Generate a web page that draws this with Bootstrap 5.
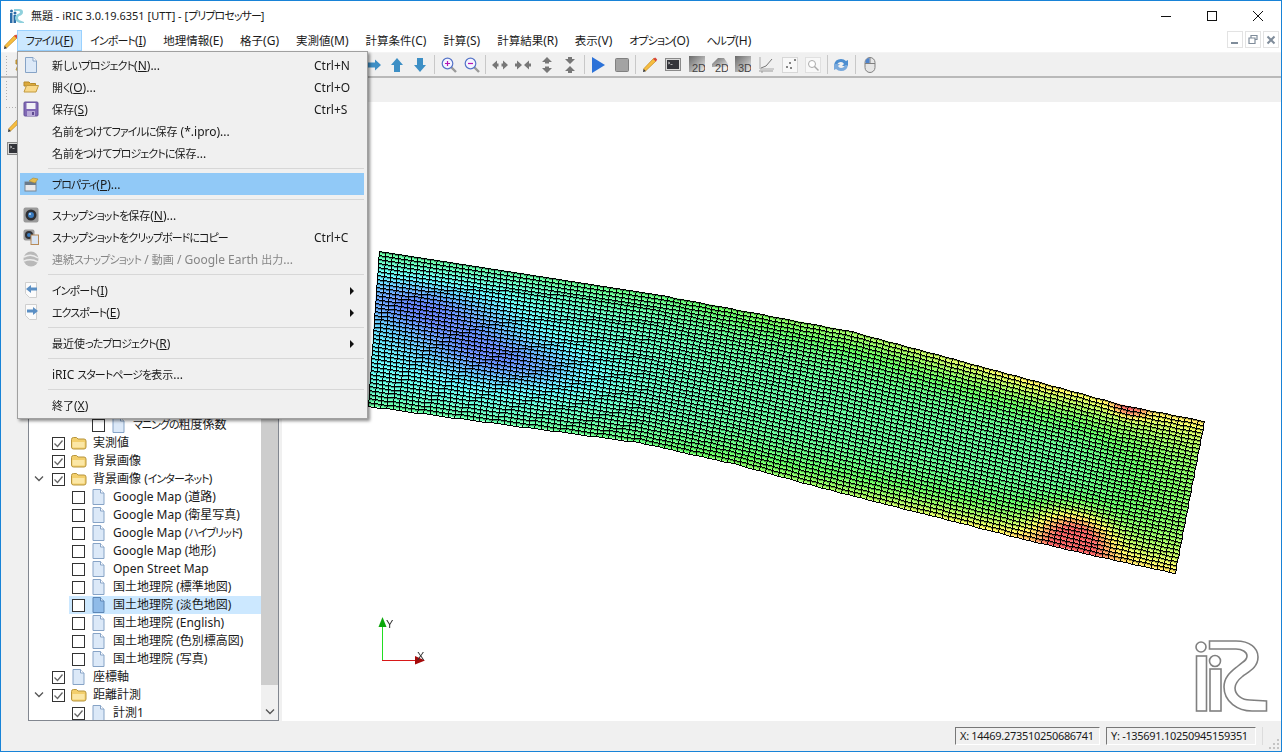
<!DOCTYPE html>
<html lang="ja">
<head>
<meta charset="UTF-8">
<meta name="viewport" content="width=device-width, initial-scale=1.0">
<title>iRIC プリプロセッサー</title>
<link href="https://cdn.jsdelivr.net/npm/bootstrap@5.3.0/dist/css/bootstrap.min.css" rel="stylesheet">
<style>
  html, body { margin: 0; height: 100%; overflow: hidden; background: #fff; }
  body { font-family: "Noto Sans", "Noto Sans CJK JP", sans-serif; font-size: 12px; line-height: 16px; color: #1a1a1a; font-feature-settings: "palt"; }
  svg { display: block; flex: none; }
  .wm-kn { font-size: 11px; letter-spacing: -.95px; }
  .wm-kj { font-size: 11px; }
  .wm-row .wm-kj { font-size: 12px; }
  .wm-mi .wm-kj { font-size: 11.5px; }
  .wm-window { width: 1282px; height: 752px; border: 1px solid #1883d7; }
  .wm-title { height: 29px; padding-left: 8px; gap: 6px; background: #fff; }
  .wm-title .wm-jp { font-size: 11px; }
  .wm-ctl { width: 46px; height: 29px; }
  .wm-menubar { height: 22px; padding-left: 2px; background: #fff; }
  .wm-pencil { width: 14px; }
  .wm-mi { height: 21px; padding: 0 7.5px; border: 1px solid transparent; line-height: 19px; white-space: nowrap; }
  .wm-mi.wm-on { background: #cce8ff; border-color: #99d1ff; }
  .wm-mdi { width: 16px; height: 17px; border: 1px solid #e3e3e3; margin-left: 2px; }
  .wm-mdis { margin-right: 2px; margin-top: 1px; }
  .wm-bar1 { height: 26px; background: #f0f0f0; border-top: 1px solid #f4f4f4; border-bottom: 2px solid #b9b9b9; }
  .wm-bar2 { height: 24px; background: #f0f0f0; }
  .wm-grip { width: 3px; height: 20px; margin-left: 4px; background-image: radial-gradient(#b0b0b0 1px, transparent 1px); background-size: 3px 3px; }
  .wm-peek { width: 8px; margin-left: 7px; overflow: hidden; }
  .wm-gap { width: 339px; }
  .wm-tb { width: 23.3px; height: 22px; }
  .wm-sep { width: 5px; height: 19px; }
  .wm-sep::after { content: ""; display: block; width: 1px; height: 100%; margin: 0 auto; background: #c8c8c8; }
  .wm-main { min-height: 0; background: #f0f0f0; }
  .wm-dock { width: 27px; padding-top: 4px; gap: 8px; }
  .wm-dock svg { margin-left: 6px; }
  .wm-hgrip { width: 12px; height: 3px; margin-left: 4px; background-image: radial-gradient(#b0b0b0 1px, transparent 1px); background-size: 3px 3px; }
  .wm-tree { width: 251px; background: #fff; border: 1px solid #828790; border-top: 0; }
  .wm-rows { min-width: 0; overflow: hidden; }
  .wm-rowsin { margin-bottom: -2px; }
  .wm-row { height: 18px; display: flex; align-items: center; white-space: nowrap; flex: none; }
  .wm-d1 { padding-left: 23px; }
  .wm-d2 { padding-left: 43px; }
  .wm-d3 { padding-left: 63px; }
  .wm-exp { width: 0; position: relative; }
  .wm-exp svg { position: absolute; left: -18px; top: -4px; }
  .wm-row .form-check-input { width: 13px; height: 13px; margin: 0 5px 0 0; flex: none; border: 1px solid #333; border-radius: 0; background-color: #fff; }
  .wm-row .form-check-input:checked { background-color: #fff; border-color: #333; background-image: url("data:image/svg+xml,%3csvg xmlns='http://www.w3.org/2000/svg' viewBox='0 0 13 13'%3e%3cpath fill='none' stroke='%23666' stroke-width='1.3' d='M2.5 6.500l3 3 5-6'/%3e%3c/svg%3e"); background-size: 13px 13px; }
  .wm-ic { width: 17px; margin-right: 6px; }
  .wm-sel { background: #cce8ff; margin-left: 40px; padding-left: 3px; }
  .wm-scroll { width: 17px; background: #f0f0f0; }
  .wm-thumb { background: #cdcdcd; }
  .wm-sdown { height: 35px; padding-bottom: 4px; }
  .wm-gutter { width: 3px; }
  .wm-view { width: 999px; height: 619px; background: #fff; }
  .wm-overlay { left: 0; top: 0; }
  .wm-status { height: 30px; background: #f0f0f0; padding-top: 6px; }
  .wm-coord { height: 18px; padding: 0 4px; border: 1px solid; border-color: #777 #fff #fff #777; white-space: nowrap; font-size: 11px; letter-spacing: -.3px; line-height: 16px; }
  .wm-cx { width: 145px; margin-right: 6px; }
  .wm-cy { width: 150px; margin-right: 6px; }
  .wm-sizer { width: 1px; height: 18px; background: #dcdcdc; margin-right: 18px; }
  .wm-sgrip { right: 1px; bottom: 1px; }
  .dropdown-menu.wm-file { display: block; position: absolute; left: 16px; top: 50px; width: 351px; height: 368px; padding: 2px 3px 2px 2px; margin: 0; border: 1px solid #a0a0a0; border-radius: 0; background: #f0f0f0; box-shadow: 2px 2px 3px rgba(0, 0, 0, .45); font-size: 12px; z-index: 20; }
  .wm-file .dropdown-item { height: 22px; padding: 0; display: flex; align-items: center; color: #1a1a1a; }
  .wm-file .dropdown-item.wm-hot { background: #91c9f7; }
  .wm-file .dropdown-item.disabled { color: #868686; }
  .wm-file .dropdown-divider { margin: 4px 0 4px 28px; border-top: 1px solid #d7d7d7; opacity: 1; }
  .wm-file .wm-jp, .wm-file .wm-key { padding-top: 2px; }
  .wm-mic { width: 32px; padding-left: 3px; flex: none; }
  .wm-key { width: 50px; flex: none; margin-left: auto; }
  .wm-tri { width: 0; height: 0; margin-left: 36px; border-left: 4px solid #111; border-top: 4px solid transparent; border-bottom: 4px solid transparent; }
</style>
</head>
<body>
<svg width="0" height="0" class="position-absolute">
  <defs>
    <linearGradient id="g-dark" x1="0" y1="0" x2="1" y2="1"><stop offset="0" stop-color="#6a6a6a"/><stop offset=".5" stop-color="#a8a8a8"/><stop offset="1" stop-color="#efefef"/></linearGradient>
    <symbol id="i-doc" viewBox="0 0 16 16"><path d="M2.500.5H10L13.500 4v11.500h-11z" fill="#dce9f8" stroke="#86a3c6"/><path d="M10 .5V4h3.500" fill="#fff" stroke="#86a3c6"/></symbol>
    <symbol id="i-docsel" viewBox="0 0 16 16"><path d="M2.500.5H10L13.500 4v11.500h-11z" fill="#8fbbe8" stroke="#5d86b5"/><path d="M10 .5V4h3.500" fill="#cfe2f5" stroke="#5d86b5"/></symbol>
    <symbol id="i-folder" viewBox="0 0 17 16"><path d="M1.500 4.500q0-2 2-2h3l1.500 1.500h6q2 0 2 2v6q0 2-2 2h-10.500q-2 0-2-2z" fill="#f3cf6c" stroke="#b7953c"/><path d="M2.500 7h12v5.500h-12z" fill="#fbe7a6"/></symbol>
    <symbol id="i-open" viewBox="0 0 16 16"><path d="M1 3h5l1.500 1.500h5V7H1z" fill="#dca93c" stroke="#b58a2b"/><path d="M1 13l2.500-6.500H15.500L13 13z" fill="#f9d98a" stroke="#c29a3f"/></symbol>
    <symbol id="i-save" viewBox="0 0 16 16"><rect x="1" y="1" width="14" height="14" rx="1" fill="#8068b4" stroke="#65509a"/><rect x="3.500" y="2" width="9" height="6" fill="#f2f2f6"/><rect x="4" y="10" width="8" height="5" fill="#b9aad8"/><rect x="9" y="11" width="2" height="3" fill="#5d4a90"/></symbol>
    <symbol id="i-prop" viewBox="0 0 16 16"><rect x="2" y="6" width="11" height="9" fill="#e8e8ea" stroke="#7d8792"/><rect x="2" y="6" width="11" height="3" fill="#69798a"/><path d="M6 5l4-3 5 1-3 4z" fill="#e6bb4c" stroke="#a98a32" stroke-width=".6"/></symbol>
    <symbol id="i-cam" viewBox="0 0 16 16"><rect x="0.500" y="0.500" width="15" height="15" rx="2" fill="#9a9a9a"/><circle cx="8" cy="8" r="5.500" fill="#2f2f33"/><circle cx="8" cy="8" r="3" fill="#3a7cc0"/><circle cx="7" cy="7" r="1" fill="#cfe6fa"/></symbol>
    <symbol id="i-camcp" viewBox="0 0 16 16"><rect x="0.500" y="0.500" width="11" height="11" rx="2" fill="#9a9a9a"/><circle cx="6" cy="6" r="4" fill="#2f2f33"/><circle cx="6" cy="6" r="2" fill="#3a7cc0"/><rect x="8" y="6" width="7.500" height="9.500" fill="#d9e4f2" stroke="#b78a58"/></symbol>
    <symbol id="i-earth" viewBox="0 0 16 16"><circle cx="8" cy="8" r="7.500" fill="#b9b9b9"/><path d="M1 6q7-4 14 1M1 10q7-3 14 1" fill="none" stroke="#ececec" stroke-width="1.500"/></symbol>
    <symbol id="i-imp" viewBox="0 0 16 16"><path d="M2.500.5h11v15h-7l-4-4z" fill="#fbfbfb" stroke="#cfcfcf"/><path d="M3 7l5-4v2.500h6v3H8V11z" fill="#5b8fc4"/></symbol>
    <symbol id="i-exp" viewBox="0 0 16 16"><path d="M2.500.5h11v15h-7l-4-4z" fill="#fbfbfb" stroke="#cfcfcf"/><path d="M15 7l-5-4v2.500H4v3h6V11z" fill="#5b8fc4"/></symbol>
    <symbol id="i-pencil" viewBox="0 0 16 16"><path d="M1.500 12l2 2 10.500-10-2.500-2.500z" fill="#f7bd3f" stroke="#c08a22" stroke-width=".7"/><path d="M11 2l2.200-1.500 2 2L14 4.500z" fill="#d8463a"/><path d="M1 15l.6-3 2.300 2.200z" fill="#333"/></symbol>
    <symbol id="i-term" viewBox="0 0 16 16"><rect x=".5" y="1.500" width="15" height="12" fill="#d9d9d9" stroke="#8a8a8a"/><rect x="2" y="3" width="12" height="9" fill="#33343a"/><path d="M3 5l2 1-2 1M5.500 7.500h2" fill="none" stroke="#ddd" stroke-width=".7"/></symbol>
    <symbol id="i-r" viewBox="0 0 16 16"><path d="M15 8L9 2.500V5.500H1v5h8v3z" fill="#3d8fc5"/></symbol>
    <symbol id="i-u" viewBox="0 0 16 16"><path d="M8 1l6 7h-3v7H5V8H2z" fill="#3d8fc5"/></symbol>
    <symbol id="i-d" viewBox="0 0 16 16"><path d="M8 15l6-7h-3V1H5v7H2z" fill="#3d8fc5"/></symbol>
    <symbol id="i-zin" viewBox="0 0 16 16"><path d="M10 10l5 5" stroke="#9a9a9a" stroke-width="2.400"/><circle cx="6.500" cy="6.500" r="5.300" fill="#f4f4ff" stroke="#5674c8" stroke-width="1.200"/><path d="M4 6.500h5M6.500 4v5" stroke="#b516b5" stroke-width="1.200"/></symbol>
    <symbol id="i-zout" viewBox="0 0 16 16"><path d="M10 10l5 5" stroke="#9a9a9a" stroke-width="2.400"/><circle cx="6.500" cy="6.500" r="5.300" fill="#f4f4ff" stroke="#5674c8" stroke-width="1.200"/><path d="M4 6.500h5" stroke="#b516b5" stroke-width="1.200"/></symbol>
    <symbol id="i-hout" viewBox="0 0 16 16"><path d="M0 8l5-4.500v3h1.500v3H5v3zM16 8l-5-4.500v3H9.500v3H11v3z" fill="#777"/></symbol>
    <symbol id="i-hin" viewBox="0 0 16 16"><path d="M7 8L2 3.500v3H0v3h2v3zM9 8l5-4.500v3h2v3h-2v3z" fill="#777"/></symbol>
    <symbol id="i-vout" viewBox="0 0 16 16"><path d="M8 0L3 5h3v1.500h4V5h3zM8 16l-5-5h3V9.500h4V11h3z" fill="#777"/></symbol>
    <symbol id="i-vin" viewBox="0 0 16 16"><path d="M8 7L3 2h3V0h4v2h3zM8 9l-5 5h3v2h4v-2h3z" fill="#777"/></symbol>
    <symbol id="i-play" viewBox="0 0 16 16"><path d="M2 0l13 8-13 8z" fill="#2c72d8"/></symbol>
    <symbol id="i-stop" viewBox="0 0 16 16"><rect x="1.500" y="1.500" width="13" height="13" rx="1" fill="#a3a3a3" stroke="#808080"/></symbol>
    <symbol id="i-chart" viewBox="0 0 16 16"><path d="M2 0v12h14" fill="none" stroke="#aaa"/><path d="M3 11l5-2 6-7" fill="none" stroke="#777"/><path d="M1 14h14M4 14v2" stroke="#999"/></symbol>
    <symbol id="i-scatter" viewBox="0 0 16 16"><rect x=".5" y=".5" width="15" height="15" fill="#f8f8f8" stroke="#bbb" stroke-dasharray="1 1"/><path d="M4 10h2M5 9v2M8 11h2M9 10v2M7 6h2M8 5v2M12 3h2M13 2v2" stroke="#444" stroke-width=".8"/></symbol>
    <symbol id="i-search" viewBox="0 0 16 16"><rect x=".5" y=".5" width="15" height="15" fill="#f8f8f8" stroke="#ccc" stroke-dasharray="1 1"/><circle cx="7" cy="7" r="3.500" fill="#fff" stroke="#aaa"/><path d="M9.500 9.500l4 4" stroke="#aaa" stroke-width="1.500"/></symbol>
    <symbol id="i-sync" viewBox="0 0 16 16"><path d="M1 8q1-6 7-6 3 0 5 2l2-1v6h-6l2-2q-1-2-3-2-3 0-4 3z" fill="#4d8ed0"/><path d="M15 8q-1 6-7 6-3 0-5-2l-2 1V7h6L5 9q1 2 3 2 3 0 4-3z" fill="#79a9dc"/></symbol>
    <symbol id="i-mouse" viewBox="0 0 16 16"><rect x="3" y=".5" width="10" height="15" rx="5" fill="#e6e6e6" stroke="#808080"/><path d="M3 6.500h10M8 .5v6" stroke="#808080"/><path d="M3.500 6V4.500Q4 1 7.500 1v5z" fill="#4f84cc"/></symbol>
    <symbol id="i-chev" viewBox="0 0 10 8"><path d="M1 1.500l4 4 4-4" fill="none" stroke="#555" stroke-width="1.300"/></symbol>
  </defs>
</svg>

<div class="wm-window position-relative d-flex flex-column overflow-hidden">
  <!-- title bar -->
  <div class="wm-title d-flex align-items-center">
    <svg width="16" height="16" viewBox="0 0 16 16"><circle cx="2.500" cy="3" r="1.500" fill="#2a6ca8"/><rect x="1" y="5" width="2.500" height="10" fill="#2a6ca8"/><circle cx="6" cy="5" r="1.500" fill="#2a6ca8"/><rect x="4.500" y="7" width="2.500" height="8" fill="#2a6ca8"/><path d="M5 1h5q4 0 4 3t-4 4q-2 2 0 4l5 2v1h-4q-5-1-5-5 0-3 4-4.500Q12 4 10 3H5z" fill="#8fd0dc"/></svg>
    <span class="wm-jp">無題 - iRIC 3.0.19.6351 [UTT] - [プリプロセッサー]</span>
    <div class="d-flex ms-auto">
      <div class="wm-ctl d-flex align-items-center justify-content-center"><svg width="10" height="10" viewBox="0 0 10 10"><path d="M0 5.500h10" stroke="#111"/></svg></div>
      <div class="wm-ctl d-flex align-items-center justify-content-center"><svg width="10" height="10" viewBox="0 0 10 10"><rect x=".5" y=".5" width="9" height="9" fill="none" stroke="#111"/></svg></div>
      <div class="wm-ctl d-flex align-items-center justify-content-center"><svg width="10" height="10" viewBox="0 0 10 10"><path d="M0 0l10 10M10 0L0 10" stroke="#111"/></svg></div>
    </div>
  </div>

  <!-- menu bar -->
  <div class="wm-menubar d-flex align-items-start">
    <div class="wm-pencil"><svg width="16" height="16" viewBox="0 0 16 16" class="mt-1"><use href="#i-pencil"/></svg></div>
    <div class="wm-mi wm-jp wm-on">ファイル(<u>F</u>)</div>
    <div class="wm-mi wm-jp">インポート(<u>I</u>)</div>
    <div class="wm-mi wm-jp">地理情報(E)</div>
    <div class="wm-mi wm-jp">格子(G)</div>
    <div class="wm-mi wm-jp">実測値(M)</div>
    <div class="wm-mi wm-jp">計算条件(C)</div>
    <div class="wm-mi wm-jp">計算(S)</div>
    <div class="wm-mi wm-jp">計算結果(R)</div>
    <div class="wm-mi wm-jp">表示(V)</div>
    <div class="wm-mi wm-jp">オプション(O)</div>
    <div class="wm-mi wm-jp">ヘルプ(H)</div>
    <div class="wm-mdis d-flex ms-auto">
      <div class="wm-mdi d-flex align-items-center justify-content-center"><svg width="10" height="10" viewBox="0 0 10 10"><path d="M1 8h7" stroke="#7f8c9a" stroke-width="2"/></svg></div>
      <div class="wm-mdi d-flex align-items-center justify-content-center"><svg width="10" height="10" viewBox="0 0 10 10"><path d="M3 2.500V.5h6v4H7M1 3h6v5.500H1z" fill="none" stroke="#7f8c9a" stroke-width="1.200"/></svg></div>
      <div class="wm-mdi d-flex align-items-center justify-content-center"><svg width="10" height="10" viewBox="0 0 10 10"><path d="M1.500 1.500l7 7M8.500 1.500l-7 7" stroke="#7f8c9a" stroke-width="2"/></svg></div>
    </div>
  </div>

  <!-- toolbar -->
  <div class="wm-bar1 d-flex align-items-center">
    <div class="wm-grip"></div>
    <div class="wm-peek"><svg width="16" height="16" viewBox="0 0 16 16"><use href="#i-open"/></svg></div>
    <div class="wm-gap"></div>
    <div class="wm-tb d-flex align-items-center justify-content-center"><svg width="16" height="16"><use href="#i-r"/></svg></div>
    <div class="wm-tb d-flex align-items-center justify-content-center"><svg width="16" height="16"><use href="#i-u"/></svg></div>
    <div class="wm-tb d-flex align-items-center justify-content-center"><svg width="16" height="16"><use href="#i-d"/></svg></div>
    <div class="wm-sep"></div>
    <div class="wm-tb d-flex align-items-center justify-content-center"><svg width="16" height="16"><use href="#i-zin"/></svg></div>
    <div class="wm-tb d-flex align-items-center justify-content-center"><svg width="16" height="16"><use href="#i-zout"/></svg></div>
    <div class="wm-sep"></div>
    <div class="wm-tb d-flex align-items-center justify-content-center"><svg width="16" height="16"><use href="#i-hout"/></svg></div>
    <div class="wm-tb d-flex align-items-center justify-content-center"><svg width="16" height="16"><use href="#i-hin"/></svg></div>
    <div class="wm-tb d-flex align-items-center justify-content-center"><svg width="16" height="16"><use href="#i-vout"/></svg></div>
    <div class="wm-tb d-flex align-items-center justify-content-center"><svg width="16" height="16"><use href="#i-vin"/></svg></div>
    <div class="wm-sep"></div>
    <div class="wm-tb d-flex align-items-center justify-content-center"><svg width="16" height="16"><use href="#i-play"/></svg></div>
    <div class="wm-tb d-flex align-items-center justify-content-center"><svg width="16" height="16"><use href="#i-stop"/></svg></div>
    <div class="wm-sep"></div>
    <div class="wm-tb d-flex align-items-center justify-content-center"><svg width="16" height="16"><use href="#i-pencil"/></svg></div>
    <div class="wm-tb d-flex align-items-center justify-content-center"><svg width="16" height="16"><use href="#i-term"/></svg></div>
    <div class="wm-tb d-flex align-items-center justify-content-center"><svg width="16" height="17" viewBox="0 0 16 17"><rect width="16" height="16" fill="url(#g-dark)"/><text x="3" y="16" font-size="11" fill="#444" font-family="Liberation Sans, sans-serif">2D</text></svg></div>
    <div class="wm-tb d-flex align-items-center justify-content-center"><svg width="16" height="17" viewBox="0 0 16 17"><path d="M0 8l6-6h6l4 6v3H0z" fill="url(#g-dark)"/><text x="3" y="16" font-size="11" fill="#444" font-family="Liberation Sans, sans-serif">2D</text></svg></div>
    <div class="wm-tb d-flex align-items-center justify-content-center"><svg width="16" height="17" viewBox="0 0 16 17"><rect width="16" height="16" fill="url(#g-dark)"/><text x="3" y="16" font-size="11" fill="#444" font-family="Liberation Sans, sans-serif">3D</text></svg></div>
    <div class="wm-tb d-flex align-items-center justify-content-center"><svg width="16" height="16"><use href="#i-chart"/></svg></div>
    <div class="wm-tb d-flex align-items-center justify-content-center"><svg width="16" height="16"><use href="#i-scatter"/></svg></div>
    <div class="wm-tb d-flex align-items-center justify-content-center"><svg width="16" height="16"><use href="#i-search"/></svg></div>
    <div class="wm-sep"></div>
    <div class="wm-tb d-flex align-items-center justify-content-center"><svg width="16" height="16"><use href="#i-sync"/></svg></div>
    <div class="wm-sep"></div>
    <div class="wm-tb d-flex align-items-center justify-content-center"><svg width="16" height="16"><use href="#i-mouse"/></svg></div>
  </div>
  <div class="wm-bar2 d-flex align-items-center"><div class="wm-grip"></div></div>

  <div class="wm-main flex-grow-1 d-flex">
    <div class="wm-dock d-flex flex-column">
      <div class="wm-hgrip"></div>
      <svg width="16" height="16" viewBox="0 0 16 16"><use href="#i-pencil"/></svg>
      <svg width="16" height="16" viewBox="0 0 16 16"><use href="#i-term"/></svg>
    </div>

    <!-- object browser -->
    <div class="wm-tree d-flex">
      <div class="wm-rows flex-grow-1 d-flex flex-column justify-content-end">
        <div class="wm-rowsin">
        <div class="wm-row wm-d3"><input class="form-check-input" type="checkbox"><svg class="wm-ic" width="16" height="16"><use href="#i-doc"/></svg><span class="wm-jp">マニングの粗度係数</span></div>
        <div class="wm-row wm-d1"><input class="form-check-input" type="checkbox" checked><svg class="wm-ic" width="17" height="16"><use href="#i-folder"/></svg><span class="wm-jp">実測値</span></div>
        <div class="wm-row wm-d1"><input class="form-check-input" type="checkbox" checked><svg class="wm-ic" width="17" height="16"><use href="#i-folder"/></svg><span class="wm-jp">背景画像</span></div>
        <div class="wm-row wm-d1"><div class="wm-exp"><svg width="10" height="8"><use href="#i-chev"/></svg></div><input class="form-check-input" type="checkbox" checked><svg class="wm-ic" width="17" height="16"><use href="#i-folder"/></svg><span class="wm-jp">背景画像 (インターネット)</span></div>
        <div class="wm-row wm-d2"><input class="form-check-input" type="checkbox"><svg class="wm-ic" width="16" height="16"><use href="#i-doc"/></svg><span class="wm-jp">Google Map (道路)</span></div>
        <div class="wm-row wm-d2"><input class="form-check-input" type="checkbox"><svg class="wm-ic" width="16" height="16"><use href="#i-doc"/></svg><span class="wm-jp">Google Map (衛星写真)</span></div>
        <div class="wm-row wm-d2"><input class="form-check-input" type="checkbox"><svg class="wm-ic" width="16" height="16"><use href="#i-doc"/></svg><span class="wm-jp">Google Map (ハイブリッド)</span></div>
        <div class="wm-row wm-d2"><input class="form-check-input" type="checkbox"><svg class="wm-ic" width="16" height="16"><use href="#i-doc"/></svg><span class="wm-jp">Google Map (地形)</span></div>
        <div class="wm-row wm-d2"><input class="form-check-input" type="checkbox"><svg class="wm-ic" width="16" height="16"><use href="#i-doc"/></svg><span class="wm-jp">Open Street Map</span></div>
        <div class="wm-row wm-d2"><input class="form-check-input" type="checkbox"><svg class="wm-ic" width="16" height="16"><use href="#i-doc"/></svg><span class="wm-jp">国土地理院 (標準地図)</span></div>
        <div class="wm-row wm-sel"><input class="form-check-input" type="checkbox"><svg class="wm-ic" width="16" height="16"><use href="#i-docsel"/></svg><span class="wm-jp">国土地理院 (淡色地図)</span></div>
        <div class="wm-row wm-d2"><input class="form-check-input" type="checkbox"><svg class="wm-ic" width="16" height="16"><use href="#i-doc"/></svg><span class="wm-jp">国土地理院 (English)</span></div>
        <div class="wm-row wm-d2"><input class="form-check-input" type="checkbox"><svg class="wm-ic" width="16" height="16"><use href="#i-doc"/></svg><span class="wm-jp">国土地理院 (色別標高図)</span></div>
        <div class="wm-row wm-d2"><input class="form-check-input" type="checkbox"><svg class="wm-ic" width="16" height="16"><use href="#i-doc"/></svg><span class="wm-jp">国土地理院 (写真)</span></div>
        <div class="wm-row wm-d1"><input class="form-check-input" type="checkbox" checked><svg class="wm-ic" width="16" height="16"><use href="#i-doc"/></svg><span class="wm-jp">座標軸</span></div>
        <div class="wm-row wm-d1"><div class="wm-exp"><svg width="10" height="8"><use href="#i-chev"/></svg></div><input class="form-check-input" type="checkbox" checked><svg class="wm-ic" width="17" height="16"><use href="#i-folder"/></svg><span class="wm-jp">距離計測</span></div>
        <div class="wm-row wm-d2"><input class="form-check-input" type="checkbox" checked><svg class="wm-ic" width="16" height="16"><use href="#i-doc"/></svg><span class="wm-jp">計測1</span></div>
        </div>
      </div>
      <div class="wm-scroll d-flex flex-column">
        <div class="wm-thumb flex-grow-1"></div>
        <div class="wm-sdown d-flex align-items-end justify-content-center"><svg width="10" height="8"><use href="#i-chev"/></svg></div>
      </div>
    </div>
    <div class="wm-gutter"></div>

    <!-- 3D view -->
    <div class="wm-view position-relative">
      <canvas id="grid" width="999" height="619" class="d-block"></canvas>
      <svg class="wm-overlay position-absolute" width="999" height="619" viewBox="282 102 999 619">
        <path d="M382.500 660V625" stroke="#22dd22" stroke-width="1"/>
        <path d="M382.500 617l-4 10h8z" fill="#0aa70a"/>
        <path d="M382 660.500h33" stroke="#d81818" stroke-width="1"/>
        <path d="M415 656l10 4.500-10 4z" fill="#a50a0a"/>
        <text x="386" y="628" font-size="11" fill="#333" font-family="Liberation Sans, sans-serif">Y</text>
        <text x="417" y="660" font-size="11" fill="#333" font-family="Liberation Sans, sans-serif">X</text>
        <g fill="#fff" stroke="#808080" stroke-width="1.600">
          <circle cx="1201" cy="647" r="5"/>
          <rect x="1196.500" y="656" width="10" height="55"/>
          <circle cx="1215" cy="661" r="5.500"/>
          <rect x="1210" y="669" width="11" height="42"/>
          <path d="M1209.500 641H1236C1250 641 1258 648 1258 657C1258 667 1250 671 1243 676C1238 680 1235 683 1235 688C1235 695 1242 700 1250 700L1266.500 701V711H1252C1238 711 1224 702 1224 687C1224 676 1232 671 1238 666C1244 661 1247 660 1247 656C1247 652 1242 649 1236 649H1209.500Z"/>
        </g>
      </svg>
    </div>
  </div>

  <!-- status bar -->
  <div class="wm-status d-flex align-items-start justify-content-end position-relative">
    <div class="wm-coord wm-cx">X: 14469.273510250686741</div>
    <div class="wm-coord wm-cy">Y: -135691.10250945159351</div>
    <div class="wm-sizer"></div>
    <svg class="wm-sgrip position-absolute" width="12" height="12" viewBox="0 0 12 12"><path d="M9 1h2v2H9zM5 5h2v2H5zM9 5h2v2H9zM1 9h2v2H1zM5 9h2v2H5zM9 9h2v2H9z" fill="#c4c4c4"/></svg>
  </div>

  <!-- open file menu -->
  <div class="dropdown-menu show wm-file">
    <a class="dropdown-item" href="#"><span class="wm-mic"><svg width="16" height="16"><use href="#i-doc"/></svg></span><span class="wm-jp">新しいプロジェクト(<u>N</u>)...</span><span class="wm-key">Ctrl+N</span></a>
    <a class="dropdown-item" href="#"><span class="wm-mic"><svg width="16" height="16"><use href="#i-open"/></svg></span><span class="wm-jp">開く(<u>O</u>)...</span><span class="wm-key">Ctrl+O</span></a>
    <a class="dropdown-item" href="#"><span class="wm-mic"><svg width="16" height="16"><use href="#i-save"/></svg></span><span class="wm-jp">保存(<u>S</u>)</span><span class="wm-key">Ctrl+S</span></a>
    <a class="dropdown-item" href="#"><span class="wm-mic"></span><span class="wm-jp">名前をつけてファイルに保存 (*.ipro)...</span></a>
    <a class="dropdown-item" href="#"><span class="wm-mic"></span><span class="wm-jp">名前をつけてプロジェクトに保存...</span></a>
    <div class="dropdown-divider"></div>
    <a class="dropdown-item wm-hot" href="#"><span class="wm-mic"><svg width="16" height="16"><use href="#i-prop"/></svg></span><span class="wm-jp">プロパティ(<u>P</u>)...</span></a>
    <div class="dropdown-divider"></div>
    <a class="dropdown-item" href="#"><span class="wm-mic"><svg width="16" height="16"><use href="#i-cam"/></svg></span><span class="wm-jp">スナップショットを保存(<u>N</u>)...</span></a>
    <a class="dropdown-item" href="#"><span class="wm-mic"><svg width="16" height="16"><use href="#i-camcp"/></svg></span><span class="wm-jp">スナップショットをクリップボードにコピー</span><span class="wm-key">Ctrl+C</span></a>
    <a class="dropdown-item disabled" href="#"><span class="wm-mic"><svg width="16" height="16"><use href="#i-earth"/></svg></span><span class="wm-jp">連続スナップショット / 動画 / Google Earth 出力...</span></a>
    <div class="dropdown-divider"></div>
    <a class="dropdown-item" href="#"><span class="wm-mic"><svg width="16" height="16"><use href="#i-imp"/></svg></span><span class="wm-jp">インポート(<u>I</u>)</span><span class="wm-key"><span class="wm-tri d-block"></span></span></a>
    <a class="dropdown-item" href="#"><span class="wm-mic"><svg width="16" height="16"><use href="#i-exp"/></svg></span><span class="wm-jp">エクスポート(<u>E</u>)</span><span class="wm-key"><span class="wm-tri d-block"></span></span></a>
    <div class="dropdown-divider"></div>
    <a class="dropdown-item" href="#"><span class="wm-mic"></span><span class="wm-jp">最近使ったプロジェクト(<u>R</u>)</span><span class="wm-key"><span class="wm-tri d-block"></span></span></a>
    <div class="dropdown-divider"></div>
    <a class="dropdown-item" href="#"><span class="wm-mic"></span><span class="wm-jp">iRIC スタートページを表示...</span></a>
    <div class="dropdown-divider"></div>
    <a class="dropdown-item" href="#"><span class="wm-mic"></span><span class="wm-jp">終了(<u>X</u>)</span></a>
  </div>
</div>

<script src="https://cdn.jsdelivr.net/npm/bootstrap@5.3.0/dist/js/bootstrap.bundle.min.js"></script>
<script>
  // the UI font of the original has tight kana, so kana and kanji runs get their own size
  document.querySelectorAll('.wm-jp').forEach(function (el) {
    Array.from(el.childNodes).forEach(function (n) {
      if (n.nodeType !== 3) return;
      const box = document.createElement('span');
      box.innerHTML = n.textContent
        .replace(/[\u3040-\u30ff]+/g, '<span class="wm-kn">$&</span>')
        .replace(/[\u4e00-\u9fff]+/g, '<span class="wm-kj">$&</span>');
      el.replaceChild(box, n);
    });
  });

  // river mesh: cross sections in screen coordinates, top point and bottom point
  const sections = [
    [0, 379, 251, 368, 406],
    [0.337, 660, 295, 638, 442],
    [0.452, 755, 313, 732, 463],
    [0.567, 850, 331, 827, 489],
    [0.804, 1043, 383, 1020, 538],
    [0.902, 1123, 405, 1097, 556],
    [1, 1204, 421, 1175, 573]
  ];
  const NU = 130, NW = 39;
  const ctx = document.getElementById('grid').getContext('2d');
  ctx.translate(-282, -102);

  function lerp(a, b, t) { return a + (b - a) * t; }
  function curve(pts, u) {
    for (let i = 1; i < pts.length; i++) {
      if (u <= pts[i][0]) return lerp(pts[i - 1][1], pts[i][1], (u - pts[i - 1][0]) / (pts[i][0] - pts[i - 1][0]));
    }
    return pts[pts.length - 1][1];
  }
  function node(u, w) {
    let i = 1;
    while (i < sections.length - 1 && u > sections[i][0]) i++;
    const a = sections[i - 1], b = sections[i], t = (u - a[0]) / (b[0] - a[0]);
    const tx = lerp(a[1], b[1], t), ty = lerp(a[2], b[2], t);
    const bx = lerp(a[3], b[3], t), by = lerp(a[4], b[4], t);
    return [lerp(tx, bx, w), lerp(ty, by, w)];
  }
  function bump(u, w, cu, cw, su, sw) {
    const du = (u - cu) / su, dw = (w - cw) / sw;
    return Math.exp(-(du * du + dw * dw));
  }
  // elevation, 0 = blue, 1 = red
  function field(u, w) {
    const base = curve([[0, .24], [.15, .24], [.3, .33], [.45, .39], [.6, .41], [.85, .42], [1, .56]], u);
    const edge = curve([[0, .18], [.35, .12], [.6, .22], [.8, .38], [1, .24]], u);
    let v = base + edge * Math.pow(Math.abs(2 * w - 1), 3);
    v -= .18 * bump(u, w, .05, .3, .09, .16);
    v -= .17 * bump(u, w, .17, .58, .1, .16);
    v -= .07 * bump(u, w, .1, .45, .07, .14);
    v += .5 * bump(u, w, .87, .9, .045, .16);
    v += .25 * bump(u, w, .91, .02, .02, .05);
    return Math.max(0, Math.min(1, v));
  }

  for (let i = 0; i < NU; i++) {
    for (let j = 0; j < NW; j++) {
      const u0 = i / NU, u1 = (i + 1) / NU, w0 = j / NW, w1 = (j + 1) / NW;
      const a = node(u0, w0), b = node(u1, w0), c = node(u1, w1), d = node(u0, w1);
      ctx.fillStyle = 'hsl(' + (240 * (1 - field((u0 + u1) / 2, (w0 + w1) / 2))) + ',100%,70%)';
      ctx.beginPath();
      ctx.moveTo(a[0], a[1]); ctx.lineTo(b[0], b[1]); ctx.lineTo(c[0], c[1]); ctx.lineTo(d[0], d[1]);
      ctx.closePath();
      ctx.fill();
    }
  }

  // aliased lines, the way the solver view draws them; h adds a softer pixel below
  function line(p, q, h) {
    let x0 = Math.round(p[0]), y0 = Math.round(p[1]);
    const x1 = Math.round(q[0]), y1 = Math.round(q[1]);
    const dx = Math.abs(x1 - x0), dy = -Math.abs(y1 - y0);
    const sx = x0 < x1 ? 1 : -1, sy = y0 < y1 ? 1 : -1;
    let err = dx + dy;
    while (true) {
      ctx.fillStyle = '#000';
      ctx.fillRect(x0, y0, 1, 1);
      if (h) {
        ctx.fillStyle = 'rgba(0,0,0,.4)';
        ctx.fillRect(x0, y0 + 1, 1, 1);
      }
      if (x0 === x1 && y0 === y1) break;
      const e2 = 2 * err;
      if (e2 >= dy) { err += dy; x0 += sx; }
      if (e2 <= dx) { err += dx; y0 += sy; }
    }
  }
  for (let i = 0; i <= NU; i++) {
    for (let j = 0; j <= NW; j++) {
      const p = node(i / NU, j / NW);
      if (i < NU) line(p, node((i + 1) / NU, j / NW), j < NW);
      if (j < NW) line(p, node(i / NU, (j + 1) / NW), false);
    }
  }
</script>
</body>
</html>
